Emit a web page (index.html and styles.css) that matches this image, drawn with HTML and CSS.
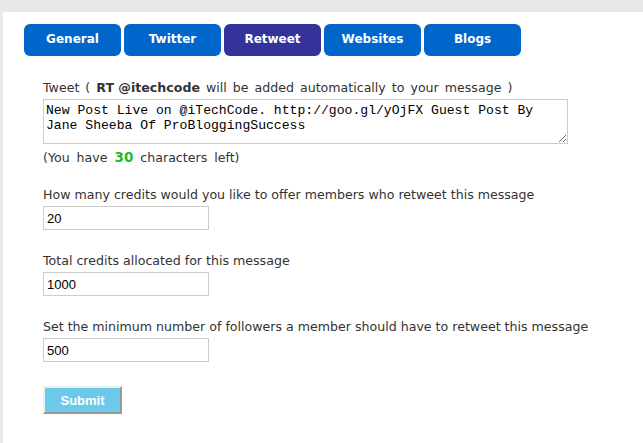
FILE: index.html
```html
<!DOCTYPE html>
<html lang="en">
<head>
  <meta charset="UTF-8" />
  <title>Retweet</title>
  <link rel="stylesheet" href="styles.css">
</head>
<body>
  <div class="panel">
    <ul class="tabs">
      <li class="tab">General</li>
      <li class="tab">Twitter</li>
      <li class="tab active">Retweet</li>
      <li class="tab">Websites</li>
      <li class="tab">Blogs</li>
    </ul>

    <form class="retweet-form">
      <div class="field field-tweet">
        <label for="tweet" class="wide">Tweet ( <b>RT @itechcode</b> will be added automatically to your message )</label>
        <textarea id="tweet">New Post Live on @iTechCode. http://goo.gl/yOjFX Guest Post By Jane Sheeba Of ProBloggingSuccess</textarea>
        <p class="hint">(You have <span class="left">30</span> characters left)</p>
      </div>

      <div class="field">
        <label for="credits">How many credits would you like to offer members who retweet this message</label>
        <input type="text" id="credits" value="20" />
      </div>

      <div class="field">
        <label for="total">Total credits allocated for this message</label>
        <input type="text" id="total" value="1000" />
      </div>

      <div class="field">
        <label for="followers">Set the minimum number of followers a member should have to retweet this message</label>
        <input type="text" id="followers" value="500" />
      </div>

      <button type="submit">Submit</button>
    </form>
  </div>
</body>
</html>
```

FILE: styles.css
```css
html, body {
  margin: 0;
  height: 100%;
}
body {
  background: #e8e8e8;
  font-family: "DejaVu Sans", Verdana, sans-serif;
  font-size: 12.6px;
  color: #333;
}
.panel {
  background: #fff;
  margin-left: 3px;
  margin-top: 12px;
  min-height: calc(100% - 12px);
  padding: 12px 0 0 21px;
  box-sizing: border-box;
}
.tabs {
  list-style: none;
  margin: 0;
  padding: 0;
  display: flex;
  gap: 3px;
}
.tab {
  width: 97px;
  height: 32px;
  line-height: 31px;
  text-align: center;
  background: #0066cc;
  color: #fff;
  font-size: 12px;
  font-weight: bold;
  border-radius: 6px;
}
.tab.active {
  background: #333399;
}
.retweet-form {
  padding: 24px 0 0 19px;
  display: flex;
  flex-direction: column;
  align-items: flex-start;
}
.field {
  display: flex;
  flex-direction: column;
  align-items: flex-start;
  margin-bottom: 23px;
}
.field-tweet {
  margin-bottom: 21px;
}
label {
  display: block;
  line-height: 16px;
  margin-bottom: 3px;
}
label.wide {
  word-spacing: 2px;
}
label.wide b {
  word-spacing: 0;
}
textarea {
  width: 525px;
  height: 45px;
  box-sizing: border-box;
  border: 1px solid #ccc;
  padding: 3px 2px;
  font-family: "Liberation Mono", "Courier New", monospace;
  font-size: 13.1px;
  line-height: 15px;
  color: #000;
  resize: vertical;
  margin: 0;
}
.hint {
  margin: 6px 0 0;
  height: 16px;
  line-height: 16px;
  word-spacing: 3px;
}
.left {
  color: #22bb22;
  font-weight: bold;
  font-size: 13.5px;
  line-height: 1;
}
input[type="text"] {
  width: 166px;
  height: 24px;
  box-sizing: border-box;
  border: 1px solid #ccc;
  padding: 0 3px;
  font-family: "Liberation Sans", Arial, sans-serif;
  font-size: 13px;
  color: #000;
  margin: 0;
}
button {
  margin-top: 1px;
  width: 79px;
  height: 28px;
  background: #6cc9ea;
  color: #fff;
  font-family: "Liberation Sans", Arial, sans-serif;
  font-weight: bold;
  font-size: 13px;
  border: 2px solid;
  border-color: #eee #999 #999 #eee;
  padding: 0;
  cursor: pointer;
}
```
